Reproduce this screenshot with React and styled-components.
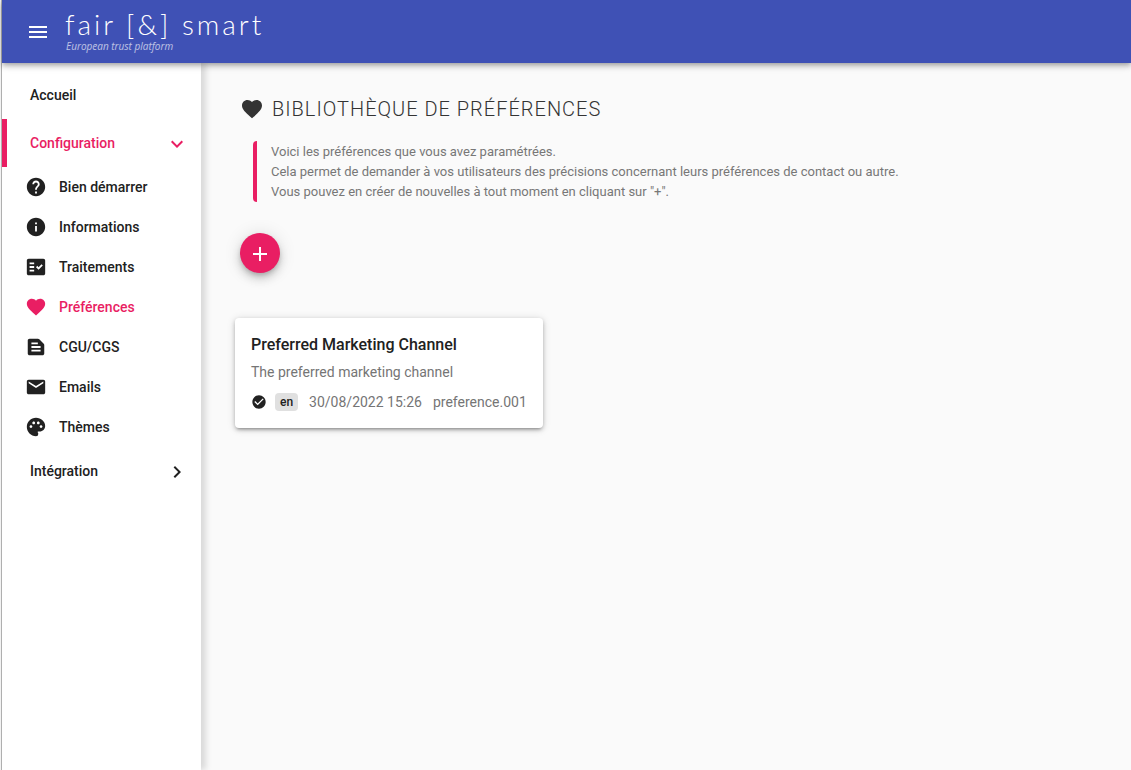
import React from "react";
import styled, { createGlobalStyle } from "styled-components";
import {
  MdMenu,
  MdExpandMore,
  MdChevronRight,
  MdHelp,
  MdInfo,
  MdFactCheck,
  MdFavorite,
  MdTextSnippet,
  MdEmail,
  MdPalette,
  MdAdd,
  MdCheckCircle,
} from "react-icons/md";

const pink = "#e91e63";
const ink = "#212121";

const GlobalStyle = createGlobalStyle`
  * { box-sizing: border-box; }
  body {
    margin: 0;
    background: #fafafa;
    color: ${ink};
    font-family: Roboto, "Liberation Sans", sans-serif;
    font-size: 14px;
    line-height: 20px;
  }
  h1, h2, p, ul { margin: 0; padding: 0; }
  ul { list-style: none; }
  button { font: inherit; border: 0; padding: 0; cursor: pointer; }
`;

const Page = styled.div`
  display: flex;
  flex-direction: column;
  min-height: 100vh;
  border-left: 1px solid #f2f2f2;
`;

const Frame = styled.div`
  display: flex;
  flex: 1;
  flex-direction: column;
  border-left: 1px solid #b0b0b0;
`;

const TopBar = styled.header`
  position: relative;
  z-index: 2;
  display: flex;
  align-items: center;
  gap: 15px;
  height: 63px;
  padding-left: 24px;
  background: #3f51b5;
  color: #fff;
  box-shadow: 0 2px 4px -1px rgba(0, 0, 0, 0.2), 0 4px 5px rgba(0, 0, 0, 0.14),
    0 1px 10px rgba(0, 0, 0, 0.12);
`;

const MenuButton = styled.button`
  display: flex;
  background: none;
  color: inherit;
`;

const Brand = styled.a`
  display: flex;
  flex-direction: column;
  color: inherit;
  text-decoration: none;
`;

const BrandName = styled.span`
  font-family: Lato, sans-serif;
  font-size: 28px;
  font-weight: 300;
  line-height: 28px;
  letter-spacing: 3px;
`;

const BrandTagline = styled.span`
  padding-left: 1px;
  font-family: "Open Sans", sans-serif;
  font-size: 10px;
  font-style: italic;
  line-height: 16px;
  opacity: 0.65;
`;

const Body = styled.div`
  display: flex;
  flex: 1;
`;

const Sidebar = styled.nav`
  flex: 0 0 199px;
  padding-top: 8px;
  background: #fff;
  box-shadow: 5px 0 6px rgba(0, 0, 0, 0.13);
`;

const Section = styled.a`
  display: flex;
  align-items: center;
  justify-content: space-between;
  height: 48px;
  padding: 0 12px 0 23px;
  border-left: 5px solid ${({ $active }) => ($active ? pink : "transparent")};
  color: ${({ $active }) => ($active ? pink : ink)};
  font-weight: 500;
  text-decoration: none;

  svg {
    margin-top: 2px;
  }
`;

const SubLink = styled.a`
  display: flex;
  align-items: center;
  gap: 12px;
  height: 40px;
  padding-left: 23px;
  color: ${({ $active }) => ($active ? pink : ink)};
  font-weight: 500;
  text-decoration: none;
`;

const Main = styled.main`
  flex: 1;
  min-width: 0;
  padding: 32px 32px 32px 34px;
`;

const Title = styled.h1`
  display: flex;
  align-items: center;
  gap: 8px;
  padding-left: 5px;
  color: #333;
  font-size: 20px;
  font-weight: 300;
  line-height: 28px;
  letter-spacing: 1px;
  text-transform: uppercase;
`;

const Intro = styled.p`
  margin: 18px 0 31px 18px;
  padding: 1px 0 0 14px;
  border-left: 4px solid ${pink};
  border-radius: 4px;
  color: #777;
  font-size: 13px;
  font-weight: 400;
  line-height: 20px;
`;

const AddButton = styled.button`
  display: flex;
  align-items: center;
  justify-content: center;
  width: 40px;
  height: 40px;
  margin-left: 5px;
  border-radius: 50%;
  background: ${pink};
  color: #fff;
  box-shadow: 0 3px 5px -1px rgba(0, 0, 0, 0.2), 0 6px 10px rgba(0, 0, 0, 0.14),
    0 1px 18px rgba(0, 0, 0, 0.12);

  svg {
    margin-top: 2px;
  }
`;

const CardList = styled.ul`
  display: flex;
  flex-wrap: wrap;
  gap: 16px;
  margin-top: 45px;
`;

const Card = styled.li`
  padding: 16px;
  border-radius: 4px;
  background: #fff;
  box-shadow: 0 3px 3px -2px rgba(0, 0, 0, 0.25), 0 2px 4px rgba(0, 0, 0, 0.2),
    0 1px 8px rgba(0, 0, 0, 0.14);
`;

const CardTitle = styled.h2`
  font-size: 16px;
  font-weight: 500;
  line-height: 22px;
`;

const CardText = styled.p`
  margin-top: 6px;
  color: #757575;
`;

const CardMeta = styled.div`
  display: flex;
  align-items: center;
  margin-top: 10px;
  color: #757575;
`;

const Status = styled.span`
  display: flex;
  margin-right: 8px;
  color: ${ink};
`;

const Language = styled.span`
  margin-right: 11px;
  padding: 0 5px;
  border-radius: 4px;
  background: #e0e0e0;
  color: ${ink};
  font-size: 12px;
  font-weight: 500;
  line-height: 18px;
`;

const Stamp = styled.time`
  margin-right: 11px;
`;

const subLinks = [
  { label: "Bien démarrer", Icon: MdHelp },
  { label: "Informations", Icon: MdInfo },
  { label: "Traitements", Icon: MdFactCheck },
  { label: "Préférences", Icon: MdFavorite, active: true },
  { label: "CGU/CGS", Icon: MdTextSnippet },
  { label: "Emails", Icon: MdEmail },
  { label: "Thèmes", Icon: MdPalette },
];

export default function App() {
  return (
    <>
      <GlobalStyle />
      <Page>
        <Frame>
          <TopBar>
            <MenuButton type="button" aria-label="Menu">
              <MdMenu size={24} />
            </MenuButton>
            <Brand href="#accueil">
              <BrandName>fair [&amp;] smart</BrandName>
              <BrandTagline>European trust platform</BrandTagline>
            </Brand>
          </TopBar>
          <Body>
            <Sidebar>
              <Section href="#accueil">Accueil</Section>
              <Section href="#configuration" $active>
                Configuration
                <MdExpandMore size={24} />
              </Section>
              <ul>
                {subLinks.map(({ label, Icon, active }) => (
                  <li key={label}>
                    <SubLink href={"#" + label} $active={active}>
                      <Icon size={22} />
                      {label}
                    </SubLink>
                  </li>
                ))}
              </ul>
              <Section href="#integration">
                Intégration
                <MdChevronRight size={24} />
              </Section>
            </Sidebar>
            <Main>
              <Title>
                <MdFavorite size={24} />
                Bibliothèque de préférences
              </Title>
              <Intro>
                Voici les préférences que vous avez paramétrées.
                <br />
                Cela permet de demander à vos utilisateurs des précisions
                concernant leurs préférences de contact ou autre.
                <br />
                Vous pouvez en créer de nouvelles à tout moment en cliquant sur
                "+".
              </Intro>
              <AddButton type="button" aria-label="Ajouter">
                <MdAdd size={24} />
              </AddButton>
              <CardList>
                <Card>
                  <CardTitle>Preferred Marketing Channel</CardTitle>
                  <CardText>The preferred marketing channel</CardText>
                  <CardMeta>
                    <Status>
                      <MdCheckCircle size={16} />
                    </Status>
                    <Language>en</Language>
                    <Stamp dateTime="2022-08-30T15:26">30/08/2022 15:26</Stamp>
                    <span>preference.001</span>
                  </CardMeta>
                </Card>
              </CardList>
            </Main>
          </Body>
        </Frame>
      </Page>
    </>
  );
}
